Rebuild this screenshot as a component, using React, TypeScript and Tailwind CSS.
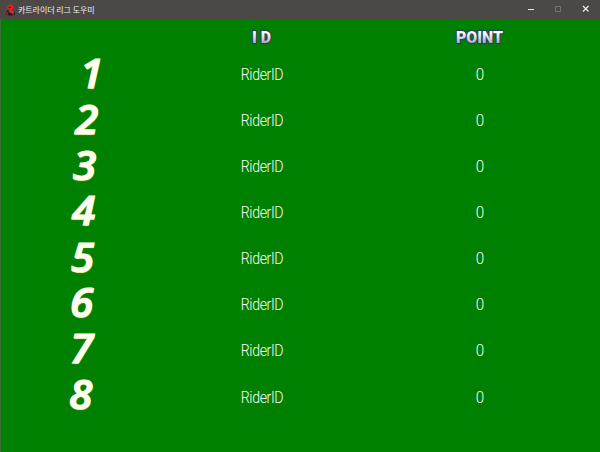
const rows = [
  { rank: 1, pad: "pl-[79px] -mt-[2px]" },
  { rank: 2, pad: "pl-[74px] -mt-[3px]" },
  { rank: 3, pad: "pl-[72px] -mt-[3px]" },
  { rank: 4, pad: "pl-[71px] -mt-[4px]" },
  { rank: 5, pad: "pl-[70px] -mt-[4px]" },
  { rank: 6, pad: "pl-[69px] -mt-[6px]" },
  { rank: 7, pad: "pl-[69px] -mt-[6px]" },
  { rank: 8, pad: "pl-[68px] -mt-[7px]" },
];

function Heading({ text, size, className }: { text: string; size: number; className: string }) {
  return (
    <svg className={className} viewBox="0 0 60 24" width="60" height="24">
      <defs>
        <linearGradient id={"metal" + size} x1="0" y1="0" x2="0" y2="1">
          <stop offset="0.3" stopColor="#ffffff" />
          <stop offset="0.8" stopColor="#aeaebb" />
        </linearGradient>
      </defs>
      <text
        x="29.5"
        y="17.8"
        textAnchor="middle"
        textLength={size}
        lengthAdjust="spacingAndGlyphs"
        fontFamily="Roboto, sans-serif"
        fontWeight="900"
        fontSize="17"
        fill={"url(#metal" + size + ")"}
        stroke="#24405a"
        strokeWidth="2.4"
        strokeLinejoin="round"
        paintOrder="stroke"
      >
        {text}
      </text>
    </svg>
  );
}

export default function App() {
  return (
    <div className="flex h-[452px] w-[600px] flex-col overflow-hidden bg-[#008000]">
      <header className="flex h-[19px] shrink-0 items-center bg-[#4b4846] pl-[5px]">
        <svg width="11" height="12" viewBox="0 0 11 12">
          <path d="M3 1.5 6 .5 8.5 2 8 5 6 6 9 8 7 10 3 9 5 6 2 4Z" fill="#ed2024" />
          <path d="M3 3 6 2.5 6 4 4 4.5Z" fill="#7a1114" />
          <path d="M1 8 3 6 4 8 8 10 10 8 10 11 6 11.5 1 11Z" fill="#211b1c" />
          <path d="M1 7.5 3.5 9.5 2 11Z M7 8 9.5 10 8 11Z" fill="#e02528" />
        </svg>
        <span className="-mt-px ml-[2px] whitespace-pre font-['Noto_Sans_CJK_KR',sans-serif] text-[8px] leading-[17px] tracking-[-0.05px] text-[#f1f1f1]">
          카트라이더 리그 도우미
        </span>
        <div className="ml-auto flex items-center">
          <svg width="81" height="19" viewBox="0 0 81 19" fill="none">
            <path d="M9 9.5h6" stroke="#e5e5e5" />
            <path d="M36.5 6.5h5v5h-5z" stroke="#767472" />
            <path d="m64 6 5.5 5.5m0-5.5L64 11.5" stroke="#f2f2f2" strokeWidth="1.1" />
          </svg>
        </div>
      </header>
      <main className="flex-1 border-l border-[#416b41]">
        <div className="flex h-[32px] items-center pt-[4px]">
          <Heading text="I D" size={19} className="ml-[231px]" />
          <Heading text="POINT" size={47} className="ml-[158px]" />
        </div>
        <div className="grid auto-rows-[46.15px]">
          {rows.map(({ rank, pad }) => (
            <div key={rank} className="grid grid-cols-[201px_120px_98px_120px] items-center">
              <div className={"flex " + pad}>
                <span className="h-[40px] origin-left scale-x-[1.08] font-['Open_Sans',sans-serif] text-[39px] leading-[40px] font-semibold italic text-[#fffff0] [-webkit-text-stroke:1.2px_#fffff0] [text-shadow:0_0_1px_#e6d868,0.5px_1px_1px_#c8c850]">
                  {rank}
                </span>
              </div>
              <span className="mt-[1px] scale-x-[0.88] text-center font-['Roboto',sans-serif] text-[16px] font-light leading-[20px] tracking-[-0.4px] text-white">
                RiderID
              </span>
              <span />
              <span className="mt-[1px] scale-x-[0.95] text-center font-['Roboto',sans-serif] text-[16px] font-light leading-[20px] text-white">
                0
              </span>
            </div>
          ))}
        </div>
      </main>
    </div>
  );
}
